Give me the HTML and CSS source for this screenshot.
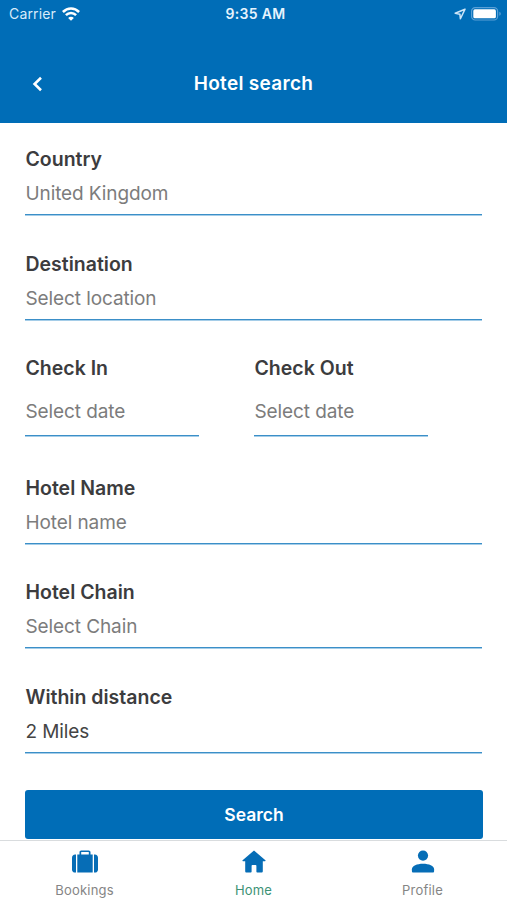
FILE: index.html
```html
<!DOCTYPE html>
<html lang="en">
<head>
  <meta charset="UTF-8">
  <meta name="viewport" content="width=device-width, initial-scale=1.0">
  <title>Hotel search</title>
  <link rel="stylesheet" href="styles.css">
</head>
<body>
  <header>
    <div class="status-bar">
      <div class="carrier">
        <span>Carrier</span>
        <svg width="18" height="14" viewBox="0 0 18 14" fill="none" stroke="#fff" stroke-width="2.5">
          <path d="M0.9 5C5.6 0.3 12.4 0.3 17.1 5"/>
          <path d="M3.9 8.2C6.8 5.2 11.2 5.2 14.1 8.2"/>
          <path d="M9 13.8L6.1 10.9C7.7 9.4 10.3 9.4 11.9 10.9Z" fill="#fff" stroke="none"/>
        </svg>
      </div>
      <div class="time">9:35 AM</div>
      <div class="indicators">
        <svg width="12" height="12" viewBox="0 0 12 12" fill="none" stroke="#cfe6f8" stroke-width="1.5" stroke-linejoin="round">
          <path d="M11 1.2L1.2 5.3L5.9 6.2L6.4 10.8Z"/>
        </svg>
        <svg width="31" height="14" viewBox="0 0 31 14">
          <rect x="0.6" y="0.6" width="26" height="12.4" rx="3.6" fill="none" stroke="#5aa0d6" stroke-width="1.2"/>
          <rect x="2.3" y="2.3" width="22.6" height="9" rx="1.6" fill="#fff"/>
          <path d="M28.3 4.8C30.3 5.6 30.3 8 28.3 8.8Z" fill="#5aa0d6"/>
        </svg>
      </div>
    </div>
    <div class="title-bar">
      <svg class="back" width="12" height="16" viewBox="0 0 12 16" fill="none" stroke="#fff" stroke-width="2.6">
        <path d="M9 1.8L2.6 8L9 14.2"/>
      </svg>
      <h1>Hotel search</h1>
    </div>
  </header>

  <main>
    <div class="field">
      <div class="label">Country</div>
      <div class="value">United Kingdom</div>
    </div>
    <div class="field">
      <div class="label">Destination</div>
      <div class="value">Select location</div>
    </div>
    <div class="dates">
      <div class="field date">
        <div class="label">Check In</div>
        <div class="value">Select date</div>
      </div>
      <div class="field date">
        <div class="label">Check Out</div>
        <div class="value">Select date</div>
      </div>
    </div>
    <div class="field">
      <div class="label">Hotel Name</div>
      <div class="value">Hotel name</div>
    </div>
    <div class="field">
      <div class="label">Hotel Chain</div>
      <div class="value">Select Chain</div>
    </div>
    <div class="field">
      <div class="label">Within distance</div>
      <div class="value filled">2 Miles</div>
    </div>
    <button class="search">Search</button>
  </main>

  <nav>
    <div class="tab">
      <svg width="28" height="24" viewBox="0 0 28 24" fill="#066db6">
        <path d="M5 4.4V22.6H4.2C2.2 22.6 1 21.3 1 19.4V7.6C1 5.7 2.2 4.4 4.2 4.4Z"/>
        <path d="M23 4.4V22.6H23.8C25.8 22.6 27 21.3 27 19.4V7.6C27 5.7 25.8 4.4 23.8 4.4Z"/>
        <path d="M6.3 4.4H8.5V2.2C8.5 1.1 9.2 0.4 10.3 0.4H17.7C18.8 0.4 19.5 1.1 19.5 2.2V4.4H21.7V22.6H6.3ZM10.2 4.4H17.8V2.1H10.2Z" fill-rule="evenodd"/>
      </svg>
      <span>Bookings</span>
    </div>
    <div class="tab active">
      <svg width="28" height="24" viewBox="0 0 28 24" fill="#066db6">
        <path d="M14 0.5L25.4 10.2C25.8 10.6 25.6 11.2 25 11.2H22.8V21.2C22.8 22 22.3 22.5 21.5 22.5H17.2C16.7 22.5 16.4 22.2 16.4 21.7V15.7C16.4 15.2 16.1 14.9 15.6 14.9H12.4C11.9 14.9 11.6 15.2 11.6 15.7V21.7C11.6 22.2 11.3 22.5 10.8 22.5H6.5C5.7 22.5 5.2 22 5.2 21.2V11.2H3C2.4 11.2 2.2 10.6 2.6 10.2Z"/>
      </svg>
      <span>Home</span>
    </div>
    <div class="tab">
      <svg width="28" height="24" viewBox="0 0 28 24" fill="#066db6">
        <circle cx="14" cy="5.6" r="5.1"/>
        <path d="M2.9 21V19.2C2.9 15.8 8 13.7 14 13.7C20 13.7 25.1 15.8 25.1 19.2V21C25.1 22 24.6 22.5 23.6 22.5H4.4C3.4 22.5 2.9 22 2.9 21Z"/>
      </svg>
      <span>Profile</span>
    </div>
  </nav>
</body>
</html>
```
FILE: styles.css
```css
* {
  box-sizing: border-box;
}
body {
  font-family: Inter, "Liberation Sans", sans-serif;
  background: #fff;
  color: #3c3c3e;
  margin: 0;
  display: flex;
  flex-direction: column;
  height: 900px;
  overflow: hidden;
}
header {
  height: 123px;
  flex: none;
  background: #006db7;
  color: #fff;
}
.status-bar {
  display: grid;
  grid-template-columns: 1fr auto 1fr;
  align-items: center;
  height: 27px;
  padding: 0 5px 0 9px;
  font-size: 14px;
}
.carrier {
  display: flex;
  align-items: center;
  gap: 6px;
  letter-spacing: 0.15px;
  color: #d8ebfa;
}
.time {
  font-weight: 600;
  letter-spacing: 0.35px;
  color: #e6f3fd;
}
.indicators {
  display: flex;
  align-items: center;
  justify-content: flex-end;
  gap: 5px;
}
.title-bar {
  display: grid;
  grid-template-columns: 1fr auto 1fr;
  align-items: center;
  height: 96px;
  padding: 17px 32px 0;
}
h1 {
  margin: 0;
  font-size: 19px;
  font-weight: 600;
  letter-spacing: 0.3px;
}
main {
  flex: 1;
  padding: 22px 25px 0;
}
.field {
  margin-bottom: 34.6px;
  border-bottom: 1px solid #3b8fc8;
  box-shadow: 0 1px 0 #a5cde8;
}
.label {
  padding-left: 0.5px;
  font-size: 19.5px;
  font-weight: 600;
  line-height: 29px;
}
.value {
  padding-left: 0.5px;
  font-size: 19px;
  letter-spacing: -0.1px;
  line-height: 40px;
  color: #7c7c7c;
}
.filled {
  color: #444;
}
.dates {
  display: flex;
  gap: 55px;
}
.date {
  width: 174px;
  height: 82px;
  margin-bottom: 37.5px;
}
.date .value {
  height: 52px;
  line-height: 57px;
}
.search {
  display: block;
  width: 458px;
  height: 49px;
  margin-top: 37px;
  border: none;
  border-radius: 3px;
  background: #006db7;
  color: #fff;
  font: 600 17.5px Inter, "Liberation Sans", sans-serif;
}
nav {
  display: flex;
  height: 60px;
  flex: none;
  border-top: 1px solid #d9dcde;
}
.tab {
  flex: 1;
  display: flex;
  flex-direction: column;
  align-items: center;
  padding-top: 9px;
  gap: 6px;
  font-size: 13px;
  letter-spacing: 0.2px;
  line-height: 20px;
  color: #858585;
}
.active {
  color: #3d9276;
}
```
